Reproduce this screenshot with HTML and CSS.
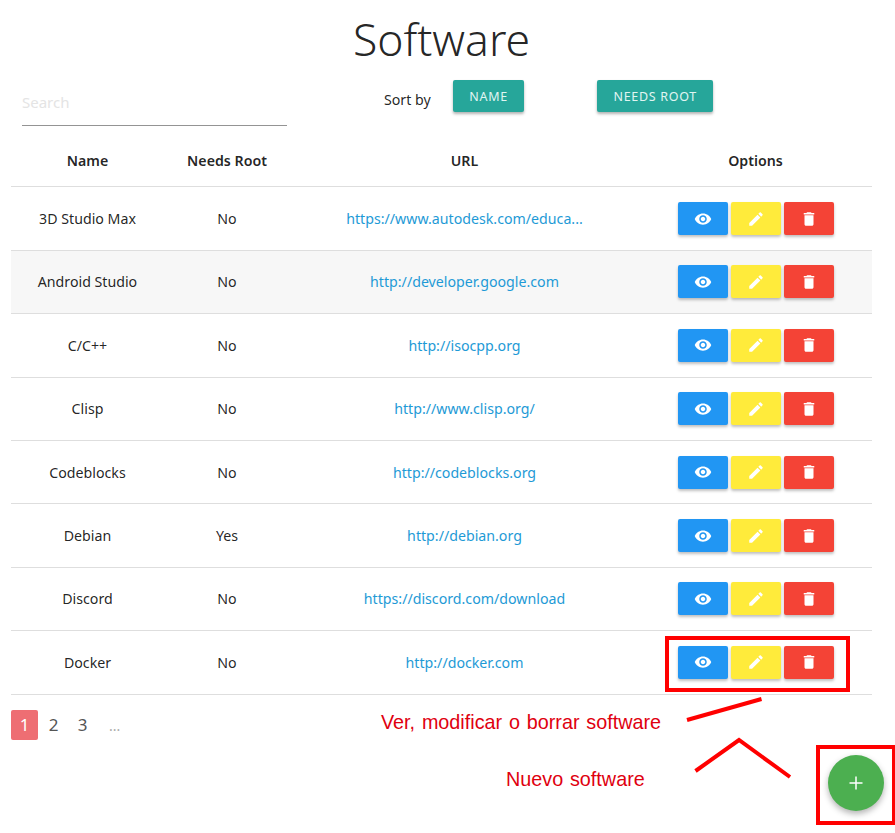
FILE: index.html
```html
<!DOCTYPE html>
<html>
  <head>
    <meta charset="utf-8" />
    <title>Software</title>
    <link rel="stylesheet" href="styles.css">
  </head>
  <body>
    <div class="page">
      <h1>Software</h1>

      <div class="toolbar">
        <div class="search">
          <input type="text" placeholder="Search" />
        </div>
        <div class="sort">
          <span class="sort-label">Sort by</span>
          <button class="sort-btn sort-name">NAME</button>
          <button class="sort-btn">NEEDS ROOT</button>
        </div>
      </div>

      <table>
        <colgroup>
          <col class="col-name" />
          <col class="col-root" />
          <col class="col-url" />
          <col class="col-options" />
        </colgroup>
        <thead>
          <tr>
            <th>Name</th>
            <th>Needs Root</th>
            <th>URL</th>
            <th>Options</th>
          </tr>
        </thead>
        <tbody id="rows"></tbody>
      </table>

      <div class="pagination">
        <span class="page-num active">1</span>
        <span class="page-num">2</span>
        <span class="page-num">3</span>
        <span class="page-dots">...</span>
      </div>
    </div>

    <!-- annotations drawn on top of the screenshot -->
    <svg class="marks" width="895" height="833" viewBox="0 0 895 833">
      <rect x="667" y="638" width="181" height="52" />
      <path d="M687 720L761.500 699" />
      <path d="M695.500 771L739 740L790 777" />
      <rect x="818" y="747" width="76" height="76" />
    </svg>
    <span class="note note-edit">Ver, modificar o borrar software</span>
    <span class="note note-new">Nuevo software</span>

    <button class="fab">
      <svg width="16" height="16" viewBox="0 0 16 16"><path d="M8 1.500V14.500M1.500 8H14.500" /></svg>
    </button>

    <script>
      const software = [
        ["3D Studio Max", "No", "https://www.autodesk.com/educa..."],
        ["Android Studio", "No", "http://developer.google.com"],
        ["C/C++", "No", "http://isocpp.org"],
        ["Clisp", "No", "http://www.clisp.org/"],
        ["Codeblocks", "No", "http://codeblocks.org"],
        ["Debian", "Yes", "http://debian.org"],
        ["Discord", "No", "https://discord.com/download"],
        ["Docker", "No", "http://docker.com"]
      ];

      const eye = '<svg width="18" height="18" viewBox="0 0 24 24"><path d="M12 4.500C7 4.500 2.730 7.610 1 12c1.730 4.390 6 7.500 11 7.500s9.270-3.110 11-7.500c-1.730-4.390-6-7.500-11-7.500zM12 17c-2.760 0-5-2.240-5-5s2.240-5 5-5 5 2.240 5 5-2.240 5-5 5zm0-8c-1.660 0-3 1.340-3 3s1.340 3 3 3 3-1.340 3-3-1.340-3-3-3z" /></svg>';
      const pencil = '<svg width="18" height="18" viewBox="0 0 24 24"><path d="M3 17.250V21h3.750L17.810 9.940l-3.750-3.750L3 17.250zM20.710 7.040c.390-.390.390-1.020 0-1.410l-2.340-2.340c-.390-.390-1.020-.390-1.410 0l-1.830 1.830 3.750 3.750 1.830-1.830z" /></svg>';
      const trash = '<svg width="18" height="18" viewBox="0 0 24 24"><path d="M6 19c0 1.100.900 2 2 2h8c1.100 0 2-.900 2-2V7H6v12zM19 4h-3.500l-1-1h-5l-1 1H5v2h14V4z" /></svg>';

      const rows = document.getElementById("rows");
      software.forEach(function (item) {
        const tr = document.createElement("tr");
        tr.innerHTML =
          "<td>" + item[0] + "</td>" +
          "<td>" + item[1] + "</td>" +
          '<td><a href="#">' + item[2] + "</a></td>" +
          '<td><div class="options">' +
          '<button class="opt blue">' + eye + "</button>" +
          '<button class="opt yellow">' + pencil + "</button>" +
          '<button class="opt red">' + trash + "</button>" +
          "</div></td>";
        rows.appendChild(tr);
      });
    </script>
  </body>
</html>
```

FILE: styles.css
```css
* {
  margin: 0;
  padding: 0;
  box-sizing: border-box;
}

html,
body {
  height: 833px;
  overflow: hidden;
}

body {
  position: relative;
  font-family: "Noto Sans", sans-serif;
  font-size: 14.200px;
  color: rgba(0, 0, 0, 0.87);
  background-color: #fff;
}

.page {
  padding: 0 23px 0 11px;
}

h1 {
  font-size: 44.500px;
  font-weight: 300;
  line-height: 46px;
  text-align: center;
  padding: 16px 0 2px;
}

.toolbar {
  display: flex;
  height: 74px;
}

.search {
  width: 265px;
  margin: 0 0 0 11px;
  height: 62px;
}

.search input {
  width: 100%;
  height: 62px;
  padding-top: 15px;
  border: none;
  border-bottom: 1px solid #949494;
  font-family: inherit;
  font-size: 15px;
  outline: none;
}

.search input::placeholder {
  color: #e4e4e4;
}

.sort {
  display: flex;
  align-items: flex-start;
  padding-left: 97px;
  padding-top: 16px;
}

.sort-label {
  margin-top: 10px;
  width: 69px;
}

.sort-btn {
  height: 32px;
  padding: 0 16.300px;
  border: none;
  border-radius: 2px;
  background-color: #26a69a;
  color: #e0f5f2;
  font-family: inherit;
  font-size: 12.500px;
  letter-spacing: 0.700px;
  box-shadow: 0 2px 3px rgba(0, 0, 0, 0.3);
}

.sort-name {
  margin-right: 73px;
}

table {
  width: 861px;
  border-collapse: collapse;
  table-layout: fixed;
}

.col-name {
  width: 153px;
}

.col-root {
  width: 126px;
}

.col-url {
  width: 349px;
}

.col-options {
  width: 233px;
}

th {
  height: 48.900px;
  padding-bottom: 3px;
  font-size: 14.200px;
  font-weight: 600;
  text-align: center;
  border-bottom: 1px solid #dedede;
}

td {
  height: 63.400px;
  text-align: center;
  border-bottom: 1px solid #dedede;
}

tbody tr:nth-child(2) {
  background-color: #f7f7f7;
}

a {
  color: #1e9ad6;
  text-decoration: none;
}

.options {
  display: flex;
  justify-content: center;
  gap: 3px;
}

.opt {
  display: flex;
  align-items: center;
  justify-content: center;
  width: 50px;
  height: 33px;
  border: none;
  border-radius: 2px;
  box-shadow: 0 2px 3px rgba(0, 0, 0, 0.25);
}

.opt svg {
  fill: #fff;
}

.blue {
  background-color: #2196f3;
}

.yellow {
  background-color: #ffeb3b;
}

.red {
  background-color: #f44336;
}

.pagination {
  display: flex;
  align-items: center;
  margin-top: 15.100px;
  font-size: 17px;
  color: #555;
}

.page-num {
  width: 27px;
  height: 30px;
  line-height: 30px;
  text-align: center;
  border-radius: 2px;
  margin-right: 2px;
}

.page-num.active {
  background-color: #ee6e73;
  color: #fff;
}

.page-dots {
  margin-left: 11px;
  color: #aaa;
  font-size: 14px;
  padding-top: 2px;
}

.marks {
  position: absolute;
  left: 0;
  top: 0;
  fill: none;
  stroke: #f00;
  stroke-width: 4;
}

.note {
  position: absolute;
  font-family: "Liberation Sans", sans-serif;
  font-size: 19.800px;
  color: #e0000f;
  white-space: nowrap;
  word-spacing: 1.300px;
}

.note-edit {
  left: 381px;
  top: 711px;
}

.note-new {
  left: 506px;
  top: 768px;
}

.fab {
  position: absolute;
  left: 828px;
  top: 755px;
  width: 56px;
  height: 56px;
  display: flex;
  align-items: center;
  justify-content: center;
  border: none;
  border-radius: 50%;
  background-color: #4caf50;
  box-shadow: 0 3px 6px rgba(0, 0, 0, 0.3);
}

.fab svg {
  stroke: #fff;
  stroke-width: 1.500;
  fill: none;
}
```
